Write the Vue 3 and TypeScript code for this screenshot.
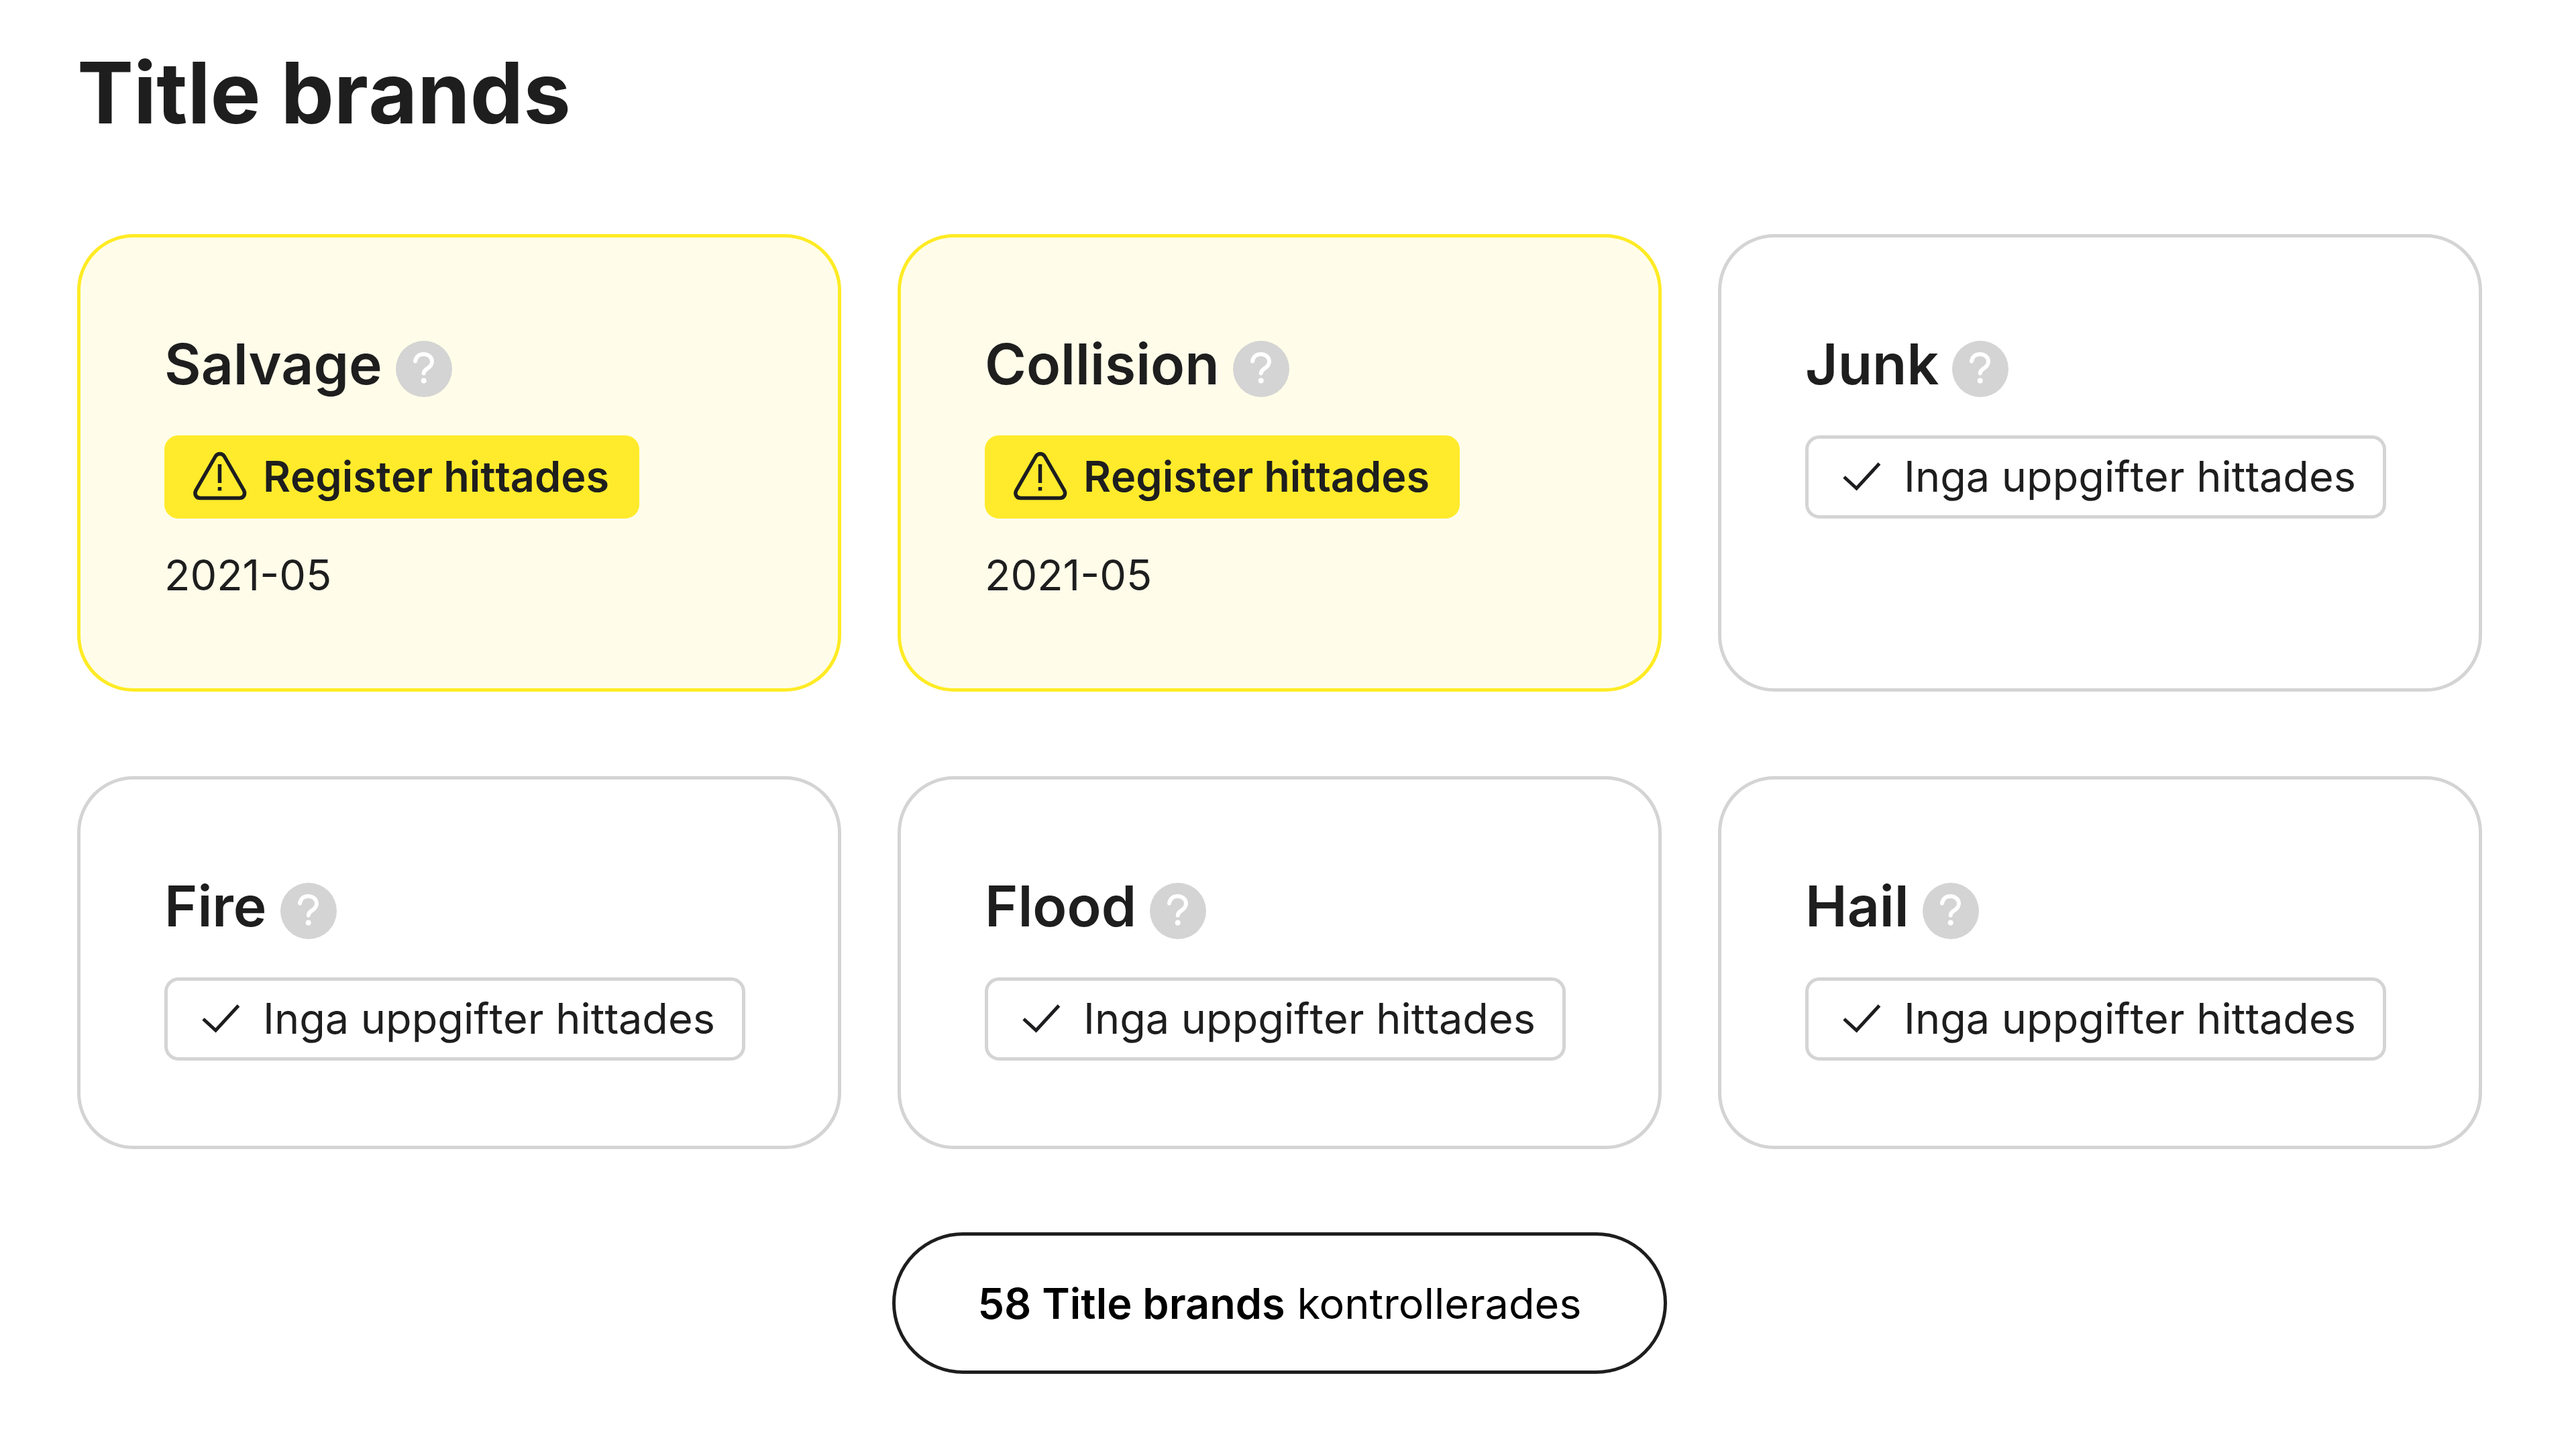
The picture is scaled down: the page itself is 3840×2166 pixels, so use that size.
<script setup lang="ts">
interface Brand {
  name: string
  found: boolean
  date?: string
}

const brands: Brand[] = [
  { name: 'Salvage', found: true, date: '2021-05' },
  { name: 'Collision', found: true, date: '2021-05' },
  { name: 'Junk', found: false },
  { name: 'Fire', found: false },
  { name: 'Flood', found: false },
  { name: 'Hail', found: false },
]
</script>

<template>
  <main class="page">
    <h1 class="title">Title brands</h1>

    <section class="grid">
      <article v-for="brand in brands" :key="brand.name" class="card" :class="{ 'card--found': brand.found }">
        <h2 class="name">
          {{ brand.name }}<button class="help" type="button" :aria-label="brand.name">
            <svg class="icon" viewBox="0 0 84 84" fill="none" aria-hidden="true">
              <circle cx="42" cy="42" r="42" fill="#d4d4d4" />
              <path
                d="M29 30.500C30 23.500 35 20 41.500 20C48.500 20 54 24.500 54 31C54 36 51 38.500 47.500 41C44 43.500 41.700 45 41.700 48.500"
                stroke="#fff" stroke-width="6" stroke-linecap="round"
              />
              <circle cx="41.700" cy="59.500" r="4" fill="#fff" />
            </svg>
          </button>
        </h2>

        <div class="badge" :class="{ 'badge--found': brand.found }">
          <svg v-if="brand.found" class="icon" viewBox="0 0 84 84" fill="none" stroke="#1d1d1f" stroke-width="5.500" aria-hidden="true">
            <path d="M71 74.500H12.500C6.500 74.500 3 69 6 63L35 12.500C38 7 45.500 7 48.500 12.500L77.500 63C80.500 69 77 74.500 71 74.500Z" />
            <path d="M41.500 24V52M41.500 58V63.500" />
          </svg>
          <svg v-else class="icon" viewBox="0 0 84 84" fill="none" stroke="#1d1d1f" stroke-width="5" aria-hidden="true">
            <path d="M17 43L35.500 60L69.500 23" />
          </svg>
          <span>{{ brand.found ? 'Register hittades' : 'Inga uppgifter hittades' }}</span>
        </div>

        <time v-if="brand.date" class="date" :datetime="brand.date">{{ brand.date }}</time>
      </article>
    </section>

    <p class="summary"><strong>58 Title brands</strong> kontrollerades</p>
  </main>
</template>

<style>
body {
  background: #fff;
}
</style>

<style scoped>
.page {
  display: flex;
  flex-direction: column;
  padding: 63px 140px 118px 115px;
  font-family: Inter, sans-serif;
  font-size: 63px;
  line-height: 84px;
  color: #1e1e1e;
}

.title {
  margin: 0 0 136px;
  font-size: 126px;
  line-height: 150px;
  font-weight: 700;
  font-kerning: none;
}

.grid {
  display: grid;
  grid-template-columns: repeat(3, minmax(0, 1fr));
  gap: 126px 84px;
}

.card {
  display: flex;
  flex-direction: column;
  align-items: flex-start;
  padding: 126px 125px 127px;
  border: 5px solid #d4d4d4;
  border-radius: 84px;
}

.card--found {
  border-color: #ffeb24;
  background: #fffde9;
}

.name {
  margin: 0 0 43px;
  font-size: 84px;
  line-height: 126px;
  font-weight: 600;
  white-space: nowrap;
}

.help {
  width: 84px;
  height: 84px;
  margin: 0 0 0 20px;
  padding: 0;
  border: 0;
  background: none;
  vertical-align: middle;
  cursor: pointer;
}

.icon {
  display: block;
  flex: none;
  width: 84px;
  height: 84px;
}

.badge {
  display: flex;
  align-items: center;
  gap: 22px;
  padding: 14px 40px 16px 36px;
  border: 5px solid #d4d4d4;
  border-radius: 21px;
  font-kerning: none;
  white-space: nowrap;
}

.badge--found {
  border-color: #ffeb2b;
  background: #ffeb2b;
  font-weight: 600;
}

.date {
  margin-top: 42px;
  font-kerning: none;
}

.summary {
  align-self: center;
  margin: 124px 0 0;
  padding: 59px 122px 58px;
  border: 5px solid #1e1e1e;
  border-radius: 106px;
  color: #000;
}

.summary strong {
  font-weight: 600;
}
</style>
